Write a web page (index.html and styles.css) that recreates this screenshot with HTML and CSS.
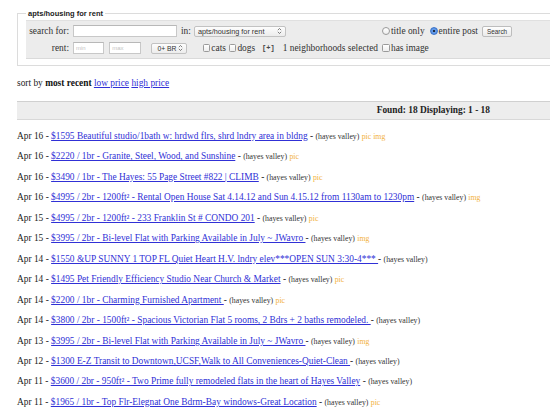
FILE: index.html
```html
<!DOCTYPE html>
<html>
<head>
<meta charset="utf-8">
<title>apts/housing for rent</title>
<link rel="stylesheet" href="styles.css">
</head>
<body>
<div class="page">
  <fieldset class="search">
    <legend>apts/housing for rent</legend>
    <div class="panel">
      <div class="lbl">search for:</div>
      <div class="mid">
        <span class="input wide"></span>
        <span class="txt in">in:</span>
        <span class="select cat">apts/housing for rent<svg class="arr" viewBox="0 0 6 9"><path d="M1 3.5 L3 1.5 L5 3.5 M1 5.5 L3 7.5 L5 5.5" fill="none" stroke="#555" stroke-width="0.9"/></svg></span>
      </div>
      <div class="right">
        <span class="radio"></span><span class="txt">title only</span>
        <span class="radio on"></span><span class="txt">entire post</span>
        <span class="button">Search</span>
      </div>

      <div class="lbl">rent:</div>
      <div class="mid">
        <span class="input small ph">min</span>
        <span class="input small ph max">max</span>
        <span class="select br">0+ BR<svg class="arr" viewBox="0 0 6 9"><path d="M1 3.5 L3 1.5 L5 3.5 M1 5.5 L3 7.5 L5 5.5" fill="none" stroke="#555" stroke-width="0.9"/></svg></span>
        <span class="check first"></span><span class="txt">cats</span>
        <span class="check"></span><span class="txt">dogs</span>
        <span class="more">[+]</span>
        <span class="txt hoods">1 neighborhoods selected</span>
      </div>
      <div class="right">
        <span class="check"></span><span class="txt">has image</span>
      </div>
    </div>
  </fieldset>

  <p class="sort">sort by <b>most recent</b> <a href="#">low price</a> <a href="#">high price</a></p>

  <div class="found"><b>Found: 18 Displaying: 1 - 18</b></div>

  <div class="list">
    <p class="row">Apr 16 - <a href="#">$1595 Beautiful studio/1bath w: hrdwd flrs, shrd lndry area in bldng</a> - <small>(hayes valley)</small> <span class="p">pic img</span></p>
    <p class="row">Apr 16 - <a href="#">$2220 / 1br - Granite, Steel, Wood, and Sunshine</a> - <small>(hayes valley)</small> <span class="p">pic</span></p>
    <p class="row">Apr 16 - <a href="#">$3490 / 1br - The Hayes: 55 Page Street #822 | CLIMB</a> - <small>(hayes valley)</small> <span class="p">pic</span></p>
    <p class="row">Apr 16 - <a href="#">$4995 / 2br - 1200ft² - Rental Open House Sat 4.14.12 and Sun 4.15.12 from 1130am to 1230pm</a> - <small>(hayes valley)</small> <span class="p">img</span></p>
    <p class="row">Apr 15 - <a href="#">$4995 / 2br - 1200ft² - 233 Franklin St # CONDO 201</a> - <small>(hayes valley)</small> <span class="p">pic</span></p>
    <p class="row">Apr 15 - <a href="#">$3995 / 2br - Bi-level Flat with Parking Available in July ~ JWavro </a> - <small>(hayes valley)</small> <span class="p">img</span></p>
    <p class="row">Apr 14 - <a href="#">$1550 &amp;UP SUNNY 1 TOP FL Quiet Heart H.V. lndry elev***OPEN SUN 3:30-4*** </a> - <small>(hayes valley)</small></p>
    <p class="row">Apr 14 - <a href="#">$1495 Pet Friendly Efficiency Studio Near Church &amp; Market</a> - <small>(hayes valley)</small> <span class="p">pic</span></p>
    <p class="row">Apr 14 - <a href="#">$2200 / 1br - Charming Furnished Apartment </a> - <small>(hayes valley)</small> <span class="p">pic</span></p>
    <p class="row">Apr 14 - <a href="#">$3800 / 2br - 1500ft² - Spacious Victorian Flat 5 rooms, 2 Bdrs + 2 baths remodeled. </a> - <small>(hayes valley)</small></p>
    <p class="row">Apr 13 - <a href="#">$3995 / 2br - Bi-level Flat with Parking Available in July ~ JWavro </a> - <small>(hayes valley)</small> <span class="p">img</span></p>
    <p class="row">Apr 12 - <a href="#">$1300 E-Z Transit to Downtown,UCSF,Walk to All Conveniences-Quiet-Clean </a> - <small>(hayes valley)</small></p>
    <p class="row">Apr 11 - <a href="#">$3600 / 2br - 950ft² - Two Prime fully remodeled flats in the heart of Hayes Valley</a> - <small>(hayes valley)</small></p>
    <p class="row">Apr 11 - <a href="#">$1965 / 1br - Top Flr-Elegnat One Bdrm-Bay windows-Great Location</a> - <small>(hayes valley)</small> <span class="p">pic</span></p>
  </div>
</div>
</body>
</html>
```

FILE: styles.css
```css
html, body {
  margin: 0;
  padding: 0;
  background: #fff;
  overflow: hidden;
}

body {
  font-family: "Liberation Serif", "Times New Roman", serif;
  font-size: 9.4px;
  color: #222;
}

.page {
  width: 560px;
  padding-left: 17px;
}

/* search form */
.search {
  margin: 9px 0 0 0;
  padding: 2px 0 6px 8px;
  border: 1px solid #dcdcdc;
}

.search legend {
  font-family: "Liberation Sans", Arial, sans-serif;
  font-weight: bold;
  font-size: 7.5px;
  line-height: 9px;
  padding: 0 2px;
  color: #222;
}

.panel {
  background: #ececec;
  border-top: 1px solid #e0e0e0;
  border-bottom: 1px solid #dadada;
  padding: 2px 0 2px;
  display: grid;
  grid-template-columns: 43px 305px auto;
  grid-auto-rows: 16px;
  column-gap: 4px;
  row-gap: 1px;
  align-items: center;
  color: #333;
}

.lbl {
  text-align: right;
}

.mid, .right {
  display: flex;
  align-items: center;
  white-space: nowrap;
}

.input {
  display: inline-block;
  height: 10px;
  background: #fff;
  border: 1px solid #c8c8c8;
  border-top-color: #b8b8b8;
  box-sizing: content-box;
  font-family: "Liberation Sans", Arial, sans-serif;
  font-size: 6px;
  line-height: 10px;
  color: #c4c4c4;
}

.input.wide { width: 102px; }
.input.small { width: 30px; padding-left: 2px; }
.input.max { width: 31px; margin-left: 5px; }

.txt.in { margin: 0 3px 0 4px; }

.select {
  display: inline-flex;
  align-items: center;
  justify-content: space-between;
  height: 9px;
  padding: 0 3px 0 3px;
  border: 1px solid #c2c2c2;
  border-radius: 2px;
  background: linear-gradient(#fdfdfd, #ececec);
  font-family: "Liberation Sans", Arial, sans-serif;
  font-size: 7px;
  line-height: 9px;
  color: #333;
}

.select.cat { width: 84px; font-size: 7.3px; }
.select.br { width: 28px; margin-left: 10px; padding-left: 5px; font-size: 6.8px; }

.arr {
  width: 5px;
  height: 8px;
}

.check {
  display: inline-block;
  width: 6px;
  height: 6px;
  border: 1px solid #9a9a9a;
  border-radius: 1.5px;
  background: linear-gradient(#fff, #eee);
  margin-right: 1px;
}

.check.first { margin-left: 16px; }
.check + .txt + .check { margin-left: 3px; }

.more {
  font-family: "Liberation Mono", monospace;
  font-size: 7px;
  font-weight: bold;
  margin-left: 7px;
  color: #444;
}

.hoods { margin-left: 8px; }

.radio {
  display: inline-block;
  width: 6px;
  height: 6px;
  border: 1px solid #9a9a9a;
  border-radius: 50%;
  background: linear-gradient(#fff, #eee);
  margin-right: 1px;
}

.radio.on {
  margin-left: 5px;
  border-color: #3b72c8;
  background: radial-gradient(circle, #1b2a45 0 1.3px, #6aa0ec 1.6px, #3f7fdc 100%);
}

.button {
  display: inline-block;
  margin-left: 4px;
  height: 9px;
  padding: 0 4px;
  border: 1px solid #bdbdbd;
  border-radius: 2px;
  background: linear-gradient(#fefefe, #eaeaea);
  font-family: "Liberation Sans", Arial, sans-serif;
  font-size: 6.4px;
  line-height: 9px;
  color: #333;
}

/* sort line */
.sort {
  margin: 11px 0 0;
  line-height: 12px;
}

.sort b { color: #111; }

a {
  color: #3030d6;
  text-decoration: underline;
}

/* result count bar */
.found {
  margin-top: 12px;
  height: 17px;
  line-height: 17px;
  background: #ededed;
  border-top: 1px solid #d0d0d0;
  border-bottom: 1px solid #d8d8d8;
  text-align: right;
  padding-right: 87px;
  font-size: 9.4px;
  color: #222;
}

/* listings */
.list {
  margin-top: 6px;
}

.row {
  margin: 0;
  height: 20.46px;
  line-height: 20.46px;
  white-space: nowrap;
}

.row small {
  font-size: 7.8px;
  color: #333;
}

.row .p {
  font-size: 7.8px;
  color: #f2b23e;
}
```
